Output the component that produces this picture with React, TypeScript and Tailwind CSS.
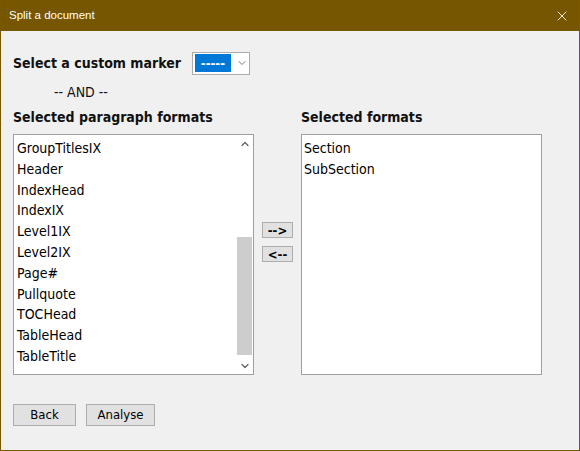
import { ChevronDown, ChevronUp, X } from 'lucide-react';

const paragraphFormats = [
  'GroupTitlesIX',
  'Header',
  'IndexHead',
  'IndexIX',
  'Level1IX',
  'Level2IX',
  'Page#',
  'Pullquote',
  'TOCHead',
  'TableHead',
  'TableTitle',
];

const selectedFormats = ['Section', 'SubSection'];

const font = "font-['DejaVu_Sans_Condensed','Liberation_Sans',sans-serif]";

function Button({ label, className = '' }: { label: string; className?: string }) {
  return (
    <button
      className={`flex items-center justify-center border border-[#adadad] bg-[#e1e1e1] text-[13px] text-black ${className}`}
    >
      {label}
    </button>
  );
}

export default function App() {
  return (
    <div className={`flex h-[451px] w-[580px] flex-col border border-t-0 border-[#7a5800] bg-[#f0f0f0] ${font}`}>
      {/* Title bar */}
      <div className="flex h-[31px] shrink-0 items-center justify-between bg-[#775600] pl-[8px] pr-[9px]">
        <span className="font-['Liberation_Sans',sans-serif] text-[11.5px] text-white">Split a document</span>
        <X size={16} strokeWidth={1.3} className="text-white" />
      </div>

      <div className="flex flex-col px-[12px] pt-[20px]">
        {/* Marker row */}
        <div className="flex h-[24px] items-center">
          <span className="text-[14px] font-bold text-[#111]">Select a custom marker</span>
          <div className="ml-[11px] flex h-[23px] w-[58px] items-center border border-[#acacac] bg-white pl-[2px]">
            <span className="flex h-[18px] w-[36px] items-center justify-center bg-[#0078d7] text-[13px] font-bold leading-none text-white">
              -----
            </span>
            <ChevronDown size={12} strokeWidth={1.6} className="ml-[5px] text-[#555]" />
          </div>
        </div>

        <div className="mt-[7px] pl-[41px] text-[14px] text-[#111]">-- AND --</div>

        <div className="mt-[4px] flex">
          {/* Left column */}
          <div className="flex w-[241px] flex-col">
            <span className="text-[14px] font-bold text-[#111]">Selected paragraph formats</span>
            <div className="mt-[6px] flex h-[241px] border border-[#a0a0a0] bg-white">
              <ul className="flex flex-1 flex-col pl-[3px] pt-[3px]">
                {paragraphFormats.map((f) => (
                  <li key={f} className="h-[20.8px] text-[14px] leading-[21px] text-black">
                    {f}
                  </li>
                ))}
              </ul>
              <div className="flex w-[17px] flex-col items-center">
                <div className="flex h-[17px] w-full items-center justify-center">
                  <ChevronUp size={12} strokeWidth={2.4} className="text-[#606060]" />
                </div>
                <div className="flex w-full flex-1 flex-col justify-end pb-[2px]">
                  <div className="mx-auto h-[118px] w-[15px] bg-[#cdcdcd]" />
                </div>
                <div className="flex h-[17px] w-full items-center justify-center">
                  <ChevronDown size={12} strokeWidth={2.4} className="text-[#606060]" />
                </div>
              </div>
            </div>
          </div>

          {/* Move buttons */}
          <div className="flex w-[47px] flex-col items-center pt-[115px]">
            <Button label="-->" className="h-[16px] w-[31px] text-[12px] font-bold leading-none" />
            <Button label="<--" className="mt-[8px] h-[16px] w-[31px] text-[12px] font-bold leading-none" />
          </div>

          {/* Right column */}
          <div className="flex w-[241px] flex-col">
            <span className="text-[14px] font-bold text-[#111]">Selected formats</span>
            <ul className="mt-[6px] flex h-[241px] flex-col border border-[#a0a0a0] bg-white pl-[2px] pt-[3px]">
              {selectedFormats.map((f) => (
                <li key={f} className="h-[20.8px] text-[14px] leading-[21px] text-black">
                  {f}
                </li>
              ))}
            </ul>
          </div>
        </div>

        {/* Footer */}
        <div className="mt-[29px] flex gap-[10px]">
          <Button label="Back" className="h-[22px] w-[63px]" />
          <Button label="Analyse" className="h-[22px] w-[69px]" />
        </div>
      </div>
    </div>
  );
}
